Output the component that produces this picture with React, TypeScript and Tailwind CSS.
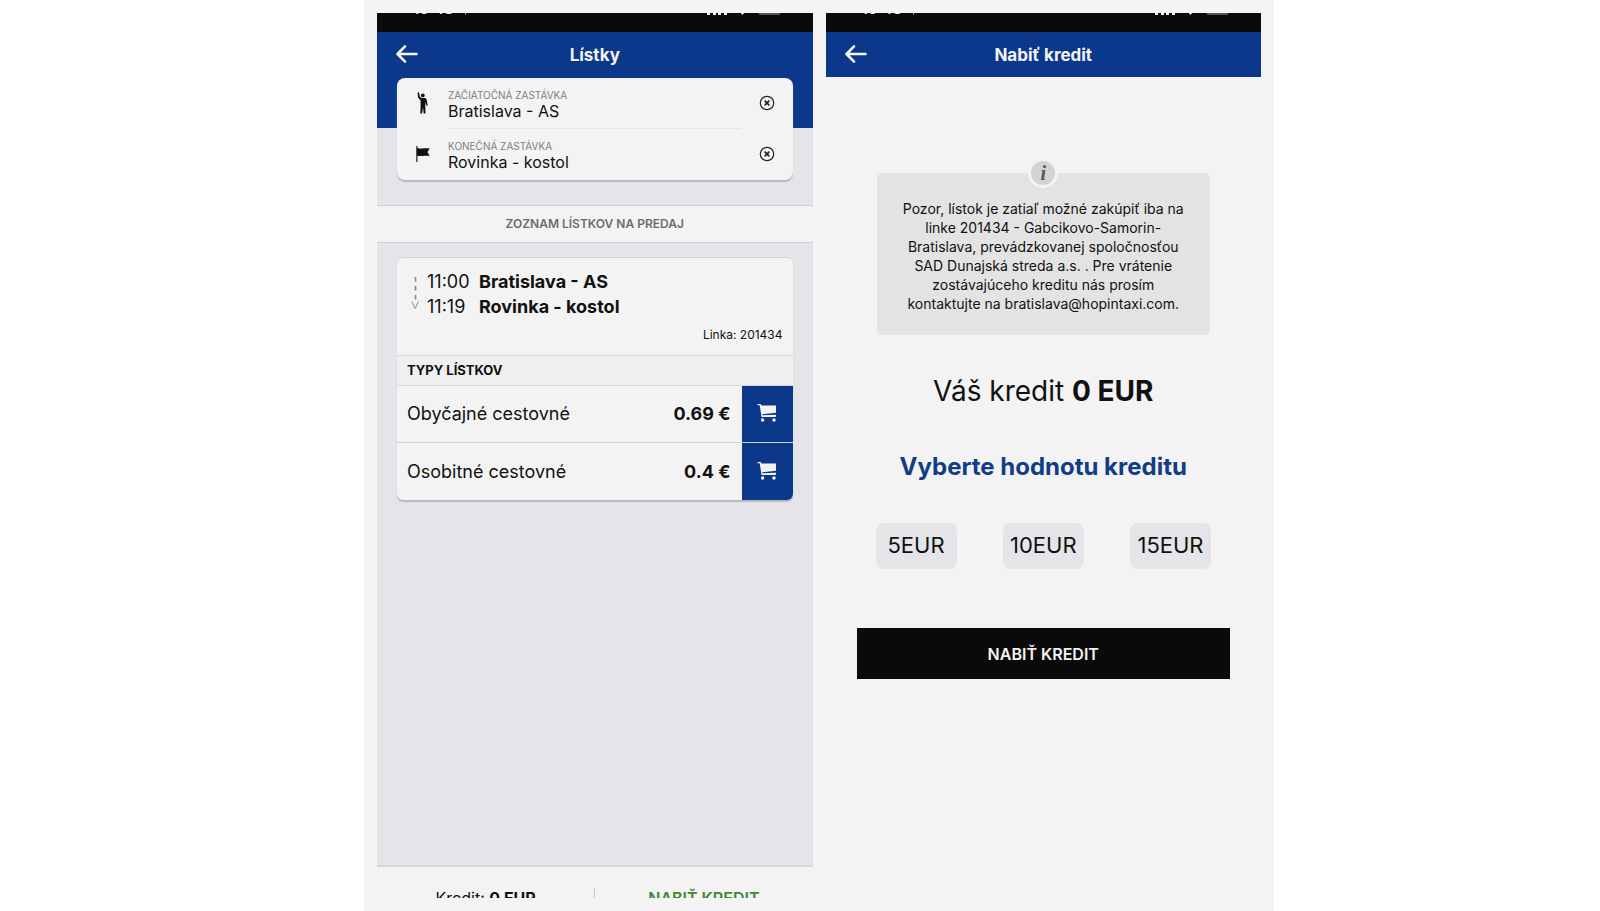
import React from 'react';

const fares = [
  { name: 'Obyčajné cestovné', price: '0.69 €' },
  { name: 'Osobitné cestovné', price: '0.4 €' },
];

const credits = ['5EUR', '10EUR', '15EUR'];

const BackIcon = () => (
  <svg viewBox="0 0 22 18" className="h-[18px] w-[22px]" fill="none" stroke="currentColor" strokeWidth="2.6" strokeLinecap="round" strokeLinejoin="round">
    <path d="M20.500 9H2M9 1.400L1.500 9 9 16.600" />
  </svg>
);

const PersonIcon = () => (
  <svg viewBox="0 0 12 22" className="h-[22px] w-3" fill="currentColor">
    <circle cx="5.8" cy="3.4" r="1.9" />
    <path d="M.6.6L2 .2l.8 4.2L4.400 6h3.200c1 0 1.700.6 2 1.600l1.100 5.600-1.200.5L8.300 10v4l.2 7.600H6.700L6 15.200l-.9 6.400H3.300l.3-7.600V8.400L1 5.600z" />
  </svg>
);

const FlagIcon = () => (
  <svg viewBox="0 0 14 16" className="h-4 w-3.5" fill="currentColor">
    <path d="M.3 0h1.100v16H.3zM1.400 2c2 .7 3.600.7 5.600.4s4.500-.3 6.700 0l-2.200 3.600 2.200 3.900c-2.200-.3-4.600-.3-6.700 0s-3.800.3-5.600-.2z" />
  </svg>
);

const ClearIcon = () => (
  <svg viewBox="0 0 16 16" className="h-4 w-4" fill="none" stroke="currentColor">
    <circle cx="8" cy="8" r="6.700" strokeWidth="1.200" />
    <path d="M5.700 5.700l4.600 4.600M10.300 5.700l-4.600 4.600" strokeWidth="1.700" />
  </svg>
);

const CartIcon = () => (
  <svg viewBox="0 0 20 18" className="h-[18px] w-5" fill="currentColor">
    <path d="M.5 0h3.200l.7 1.500H19v7.300L5.300 10.300l.1.900L19 10.700v1.200l-.5 1.100H4.500L2.700 1.300H.5z" />
    <circle cx="5.600" cy="16" r="1.700" />
    <circle cx="17" cy="16" r="1.700" />
  </svg>
);

const RouteIcon = () => (
  <svg viewBox="0 0 8 34" className="h-[34px] w-2" fill="none" stroke="#8b8b8b">
    <path d="M4.500 1v24" strokeWidth="1.700" strokeDasharray="4.500 4.500" />
    <path d="M.8 25.500l3.400 7 3.200-7" strokeWidth="1" />
  </svg>
);

const StatusBar = () => (
  <div className="h-[19px] overflow-hidden bg-[#0a0a0a] text-[#f3f3f3]">
    <div className="-mt-3 flex h-4 items-center justify-between pl-9 pr-[31px]">
      <div className="flex items-center gap-1">
        <span className="text-[15px] font-semibold leading-4">10:48</span>
        <svg viewBox="0 0 12 12" className="h-3 w-3" fill="currentColor">
          <path d="M12 0L7.500 12 6 6 0 4.500z" />
        </svg>
      </div>
      <svg viewBox="0 0 76 12" className="h-3 w-[76px]" fill="currentColor">
        <path d="M1 7h3v5H1zM7 5h3v7H7zM12 3h3v9h-3zM18 1h3v11h-3zM31 5q5.500-5 11 0L36.500 12z" />
        <rect x="52" y="0" width="23" height="12" rx="3" fill="#555" />
      </svg>
    </div>
  </div>
);

const Header = ({ title }: { title: string }) => (
  <header className="grid h-[45px] grid-cols-[60px_1fr_60px] items-center bg-[#0b388b] text-[#f3f3f3]">
    <button type="button" aria-label="Späť" className="flex pb-0.5 pl-[19px]">
      <BackIcon />
    </button>
    <h1 className="text-center text-[17px] font-bold leading-5">{title}</h1>
  </header>
);

type StopProps = { id: string; label: string; value: string; icon: React.ReactNode; last?: boolean };

const StopField = ({ id, label, value, icon, last }: StopProps) => (
  <div className="flex h-[51px] items-center">
    <div className="flex w-[51px] justify-center pb-0.5">{icon}</div>
    <div className={`flex h-full min-w-0 flex-1 flex-col justify-center border-b pt-[3px] ${last ? 'border-transparent' : 'border-[#e6e6e6]'}`}>
      <label htmlFor={id} className="text-[10px] leading-3 text-[#808080]">{label}</label>
      <input id={id} defaultValue={value} className="h-5 w-full bg-transparent text-base leading-5 outline-none" />
    </div>
    <button type="button" aria-label="Vymazať" className="flex w-[52px] justify-center pb-0.5 text-[#222]">
      <ClearIcon />
    </button>
  </div>
);

const TicketsScreen = () => (
  <section className="flex min-w-0 flex-1 flex-col bg-[#e4e4e9]">
    <StatusBar />
    <Header title="Lístky" />
    <div className="bg-linear-to-b from-[#0b388b] from-[51px] to-[#e4e4e9] to-[51px] px-5 pb-[25px] pt-px">
      <div className="rounded-lg bg-[#f3f3f3] shadow-[0_2px_1px_#b9b9bc]">
        <StopField id="from" label="ZAČIATOČNÁ ZASTÁVKA" value="Bratislava - AS" icon={<PersonIcon />} />
        <StopField id="to" label="KONEČNÁ ZASTÁVKA" value="Rovinka - kostol" icon={<FlagIcon />} last />
      </div>
    </div>
    <h2 className="border-y border-[#d0d0d3] bg-[#f3f3f3] py-[9px] text-center text-xs font-semibold leading-[18px] text-[#6c6c6c]">
      ZOZNAM LÍSTKOV NA PREDAJ
    </h2>
    <div className="flex-1 px-5 pt-[14px]">
      <div className="overflow-hidden rounded-md border-t border-[#d4d4d8] bg-[#f3f3f3] shadow-[0_2px_1px_#b9b9bc]">
        <div className="flex px-[10px] pt-[11px]">
          <div className="flex w-5 pl-1 pt-[7px]">
            <RouteIcon />
          </div>
          <div className="grid flex-1 grid-cols-[52px_1fr] text-lg leading-[25px]">
            <span>11:00</span>
            <b className="font-bold">Bratislava - AS</b>
            <span>11:19</span>
            <b className="font-bold">Rovinka - kostol</b>
          </div>
        </div>
        <p className="px-[10px] pb-3 pt-2 text-right text-xs leading-4">Linka: 201434</p>
        <h3 className="border-y border-[#d6d6d6] bg-[#efefef] px-[10px] text-[13px] font-bold leading-[29px]">TYPY LÍSTKOV</h3>
        <ul className="divide-y divide-[#d0d0d0]">
          {fares.map((fare) => (
            <li key={fare.name} className="flex h-[57px] items-center">
              <span className="flex-1 pl-[10px] text-lg">{fare.name}</span>
              <b className="pr-[11px] text-lg font-bold">{fare.price}</b>
              <button type="button" aria-label="Kúpiť" className="flex h-full w-[51px] items-center justify-center bg-[#0b388b] pb-0.5 text-[#f3f3f3]">
                <CartIcon />
              </button>
            </li>
          ))}
        </ul>
      </div>
    </div>
    <footer className="flex h-[33px] overflow-hidden border-t-2 border-[#d8d8d8] bg-[#f3f3f3] pt-[21px] text-base leading-5">
      <p className="h-5 flex-1 border-r border-[#c8c8c8] text-center">
        Kredit: <b className="font-bold">0 EUR</b>
      </p>
      <a href="#" className="flex-1 text-center font-semibold text-[#3e8835]">NABIŤ KREDIT</a>
    </footer>
  </section>
);

const CreditScreen = () => (
  <section className="flex min-w-0 flex-1 flex-col bg-[#f3f3f3]">
    <StatusBar />
    <Header title="Nabiť kredit" />
    <div className="flex flex-col px-[31px] pt-24 text-center">
      <div className="relative mx-5 rounded-md bg-[#e3e3e3] px-5 pb-[22px] pt-[26px]">
        <div className="absolute -top-[15px] left-1/2 flex h-[30px] w-[30px] -translate-x-1/2 items-center justify-center rounded-full border-[3px] border-[#f3f3f3] bg-[#d3d3d3] font-['Liberation_Serif',serif] text-xl font-bold italic text-[#555]">
          i
        </div>
        <p className="text-sm leading-[19px]">
          Pozor, lístok je zatiaľ možné zakúpiť iba na linke 201434 - Gabcikovo-Samorin-Bratislava, prevádzkovanej spoločnosťou SAD Dunajská streda a.s. . Pre vrátenie zostávajúceho kreditu nás prosím kontaktujte na bratislava@hopintaxi.com.
        </p>
      </div>
      <p className="mt-[38px] text-[28px] leading-9">
        Váš kredit <b className="font-bold">0 EUR</b>
      </p>
      <h2 className="mt-10 text-2xl font-bold leading-9 text-[#123c87]">Vyberte hodnotu kreditu</h2>
      <div className="mx-[19px] mt-[38px] flex justify-between">
        {credits.map((credit) => (
          <button key={credit} type="button" className="h-[46px] w-[81px] rounded-lg bg-[#e4e4e9] pb-0.5 text-[22px]">
            {credit}
          </button>
        ))}
      </div>
      <button type="button" className="mt-[59px] h-[51px] bg-[#0a0a0a] text-base font-semibold text-[#f3f3f3]">
        NABIŤ KREDIT
      </button>
    </div>
  </section>
);

const App = () => {
  return (
    <div className="flex min-h-screen justify-center bg-white pl-[38px] font-['Inter',sans-serif] text-[#111]">
      <main className="flex w-full max-w-[910px] gap-[13px] bg-[#f4f4f4] p-[13px]">
        <TicketsScreen />
        <CreditScreen />
      </main>
    </div>
  );
};

export default App;
